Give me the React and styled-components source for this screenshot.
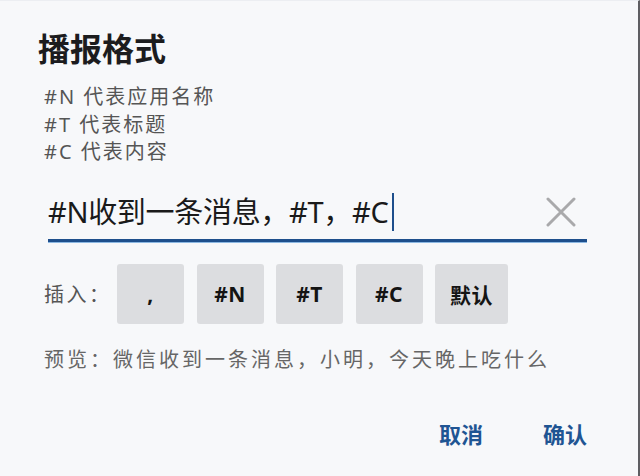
import React from "react";
import styled, { createGlobalStyle } from "styled-components";

const GlobalStyle = createGlobalStyle`
  html, body { margin: 0; padding: 0; background: #f7f8fa; }
  body { font-family: "Noto Sans", "Noto Sans CJK SC", sans-serif; }
  * { box-sizing: border-box; }
`;

const Dialog = styled.div`
  width: 640px;
  height: 476px;
  padding: 29px 0 0 38px;
  background: #f7f8fa;
  border-right: 2px solid #5e5e62;
  border-top: 1px solid #eceef2;
  display: flex;
  flex-direction: column;
`;

const Title = styled.h1`
  margin: 0;
  font-size: 32px;
  line-height: 38px;
  font-weight: 700;
  color: #1c1c1e;
`;

const Help = styled.div`
  margin: 15px 0 0 6px;
  font-size: 20px;
  line-height: 27.5px;
  letter-spacing: 2px;
  color: #555;
`;

const Field = styled.div`
  margin: 24px 0 0 10px;
  width: 539px;
  display: flex;
  align-items: center;
  padding: 2px 11px 7px 0;
  border-bottom: 3px solid #1e4f8c;
  box-shadow: 0 1px 0 #8cb8e2;
`;

const Value = styled.div`
  flex: 1;
  font-size: 29px;
  line-height: 40px;
  letter-spacing: -0.3px;
  color: #1a1a1a;
  display: flex;
  align-items: center;
`;

const Caret = styled.span`
  display: inline-block;
  width: 2px;
  height: 38px;
  background: #1e4f8c;
  margin-left: 3px;
`;

const ClearButton = styled.button`
  border: 0;
  background: none;
  padding: 0;
  width: 30px;
  height: 30px;
  display: flex;
  cursor: pointer;
`;

const InsertRow = styled.div`
  margin: 22px 0 0 6px;
  display: flex;
  align-items: center;
`;

const Label = styled.span`
  font-size: 20px;
  color: #555;
  width: 73px;
  letter-spacing: 2.5px;
`;

const Chips = styled.div`
  display: flex;
  gap: 12.5px;
`;

const Chip = styled.button`
  width: ${(p) => p.$w || 67}px;
  height: 60px;
  border: 0;
  border-radius: 3px;
  background: #dcdde0;
  font-family: "Noto Sans", "Noto Sans CJK SC", sans-serif;
  font-size: 21px;
  font-weight: 700;
  letter-spacing: 0.5px;
  color: #141414;
  padding: 0;
`;

const Preview = styled.div`
  margin: 21px 0 0 6px;
  font-size: 20px;
  line-height: 30px;
  color: #666;
  letter-spacing: 3px;
  white-space: nowrap;
`;

const Footer = styled.div`
  margin-top: 44px;
  width: 549px;
  display: flex;
  justify-content: flex-end;
  gap: 60px;
`;

const Action = styled.button`
  border: 0;
  background: none;
  padding: 0;
  font-family: "Noto Sans", "Noto Sans CJK SC", sans-serif;
  font-size: 22px;
  line-height: 30px;
  font-weight: 700;
  color: #1f5593;
`;

export default function App() {
  return (
    <>
      <GlobalStyle />
      <Dialog>
        <Title>播报格式</Title>
        <Help>
          <div>#N 代表应用名称</div>
          <div>#T 代表标题</div>
          <div>#C 代表内容</div>
        </Help>
        <Field>
          <Value>
            #N收到一条消息，#T，#C<Caret />
          </Value>
          <ClearButton aria-label="清除">
            <svg width="30" height="30" viewBox="0 0 30 30">
              <path d="M2 2 L28 28 M28 2 L2 28" stroke="#a9a9ab" strokeWidth="3" strokeLinecap="round" />
            </svg>
          </ClearButton>
        </Field>
        <InsertRow>
          <Label>插入：</Label>
          <Chips>
            <Chip>,</Chip>
            <Chip>#N</Chip>
            <Chip>#T</Chip>
            <Chip>#C</Chip>
            <Chip $w={73}>默认</Chip>
          </Chips>
        </InsertRow>
        <Preview>预览：微信收到一条消息，小明，今天晚上吃什么</Preview>
        <Footer>
          <Action>取消</Action>
          <Action>确认</Action>
        </Footer>
      </Dialog>
    </>
  );
}
